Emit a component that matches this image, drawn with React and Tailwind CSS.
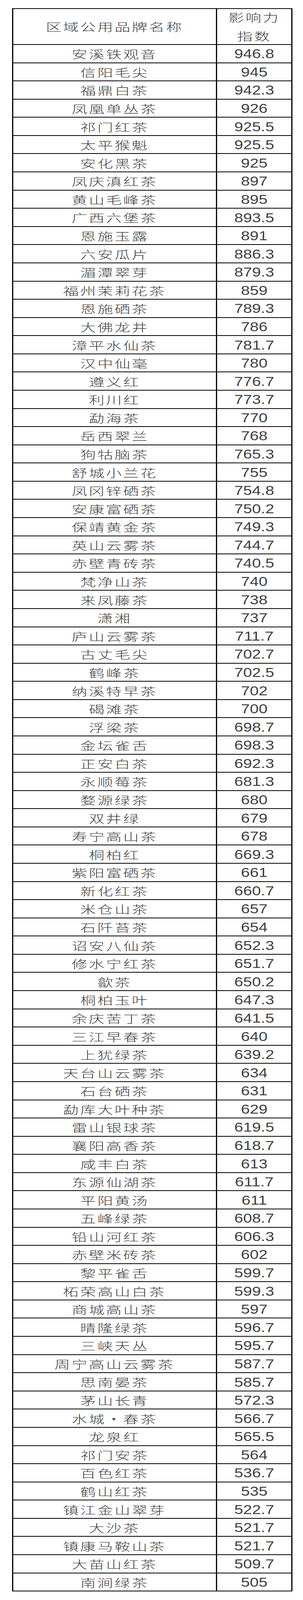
const rows = [
  ["安溪铁观音", "946.8"],
  ["信阳毛尖", "945"],
  ["福鼎白茶", "942.3"],
  ["凤凰单丛茶", "926"],
  ["祁门红茶", "925.5"],
  ["太平猴魁", "925.5"],
  ["安化黑茶", "925"],
  ["凤庆滇红茶", "897"],
  ["黄山毛峰茶", "895"],
  ["广西六堡茶", "893.5"],
  ["恩施玉露", "891"],
  ["六安瓜片", "886.3"],
  ["湄潭翠芽", "879.3"],
  ["福州茉莉花茶", "859"],
  ["恩施硒茶", "789.3"],
  ["大佛龙井", "786"],
  ["漳平水仙茶", "781.7"],
  ["汉中仙毫", "780"],
  ["遵义红", "776.7"],
  ["利川红", "773.7"],
  ["勐海茶", "770"],
  ["岳西翠兰", "768"],
  ["狗牯脑茶", "765.3"],
  ["舒城小兰花", "755"],
  ["凤冈锌硒茶", "754.8"],
  ["安康富硒茶", "750.2"],
  ["保靖黄金茶", "749.3"],
  ["英山云雾茶", "744.7"],
  ["赤壁青砖茶", "740.5"],
  ["梵净山茶", "740"],
  ["来凤藤茶", "738"],
  ["潇湘", "737"],
  ["庐山云雾茶", "711.7"],
  ["古丈毛尖", "702.7"],
  ["鹤峰茶", "702.5"],
  ["纳溪特早茶", "702"],
  ["碣滩茶", "700"],
  ["浮梁茶", "698.7"],
  ["金坛雀舌", "698.3"],
  ["正安白茶", "692.3"],
  ["永顺莓茶", "681.3"],
  ["婺源绿茶", "680"],
  ["双井绿", "679"],
  ["寿宁高山茶", "678"],
  ["桐柏红", "669.3"],
  ["紫阳富硒茶", "661"],
  ["新化红茶", "660.7"],
  ["米仓山茶", "657"],
  ["石阡苔茶", "654"],
  ["诏安八仙茶", "652.3"],
  ["修水宁红茶", "651.7"],
  ["歙茶", "650.2"],
  ["桐柏玉叶", "647.3"],
  ["余庆苦丁茶", "641.5"],
  ["三江早春茶", "640"],
  ["上犹绿茶", "639.2"],
  ["天台山云雾茶", "634"],
  ["石台硒茶", "631"],
  ["勐库大叶种茶", "629"],
  ["雷山银球茶", "619.5"],
  ["襄阳高香茶", "618.7"],
  ["咸丰白茶", "613"],
  ["东源仙湖茶", "611.7"],
  ["平阳黄汤", "611"],
  ["五峰绿茶", "608.7"],
  ["铅山河红茶", "606.3"],
  ["赤壁米砖茶", "602"],
  ["黎平雀舌", "599.7"],
  ["柘荣高山白茶", "599.3"],
  ["商城高山茶", "597"],
  ["晴隆绿茶", "596.7"],
  ["三峡天丛", "595.7"],
  ["周宁高山云雾茶", "587.7"],
  ["思南晏茶", "585.7"],
  ["茅山长青", "572.3"],
  ["水城·春茶", "566.7"],
  ["龙泉红", "565.5"],
  ["祁门安茶", "564"],
  ["百色红茶", "536.7"],
  ["鹤山红茶", "535"],
  ["镇江金山翠芽", "522.7"],
  ["大沙茶", "521.7"],
  ["镇康马鞍山茶", "521.7"],
  ["大苗山红茶", "509.7"],
  ["南涧绿茶", "505"],
];

const cjk =
  "inline-block font-['Noto_Sans_CJK_SC',sans-serif] font-light text-[40px] tracking-[4px] leading-none scale-y-[0.72]";
const num =
  "inline-block font-['Liberation_Sans',sans-serif] text-[48px] leading-none scale-x-[0.85] scale-y-[0.7]";

export default function App() {
  return (
    <div className="w-[776px] h-[4096px] overflow-hidden bg-white pt-[21px] text-[#404040]">
      {/* Table */}
      <div className="ml-[31px] w-[718px] bg-black px-[3px] py-[2px] grid grid-cols-[519px_190px] gap-x-[3px] gap-y-[2px]">
        {/* Header */}
        <div className="bg-white h-[90px] flex items-center justify-center">
          <span className={cjk}>区域公用品牌名称</span>
        </div>
        <div className="bg-white h-[90px] flex flex-col items-center justify-center">
          <span className={`${cjk} !leading-[48px]`}>影响力</span>
          <span className={`${cjk} !leading-[48px]`}>指数</span>
        </div>

        {/* Rows */}
        {rows.map(([name, score], i) => (
          <div key={i} className="contents">
            <div className="bg-white h-[44.58px] flex items-center justify-center pt-[2px]">
              <span className={cjk}>{name}</span>
            </div>
            <div className="bg-white h-[44.58px] flex items-center justify-center pt-[2px]">
              <span className={num}>{score}</span>
            </div>
          </div>
        ))}
      </div>
    </div>
  );
}
